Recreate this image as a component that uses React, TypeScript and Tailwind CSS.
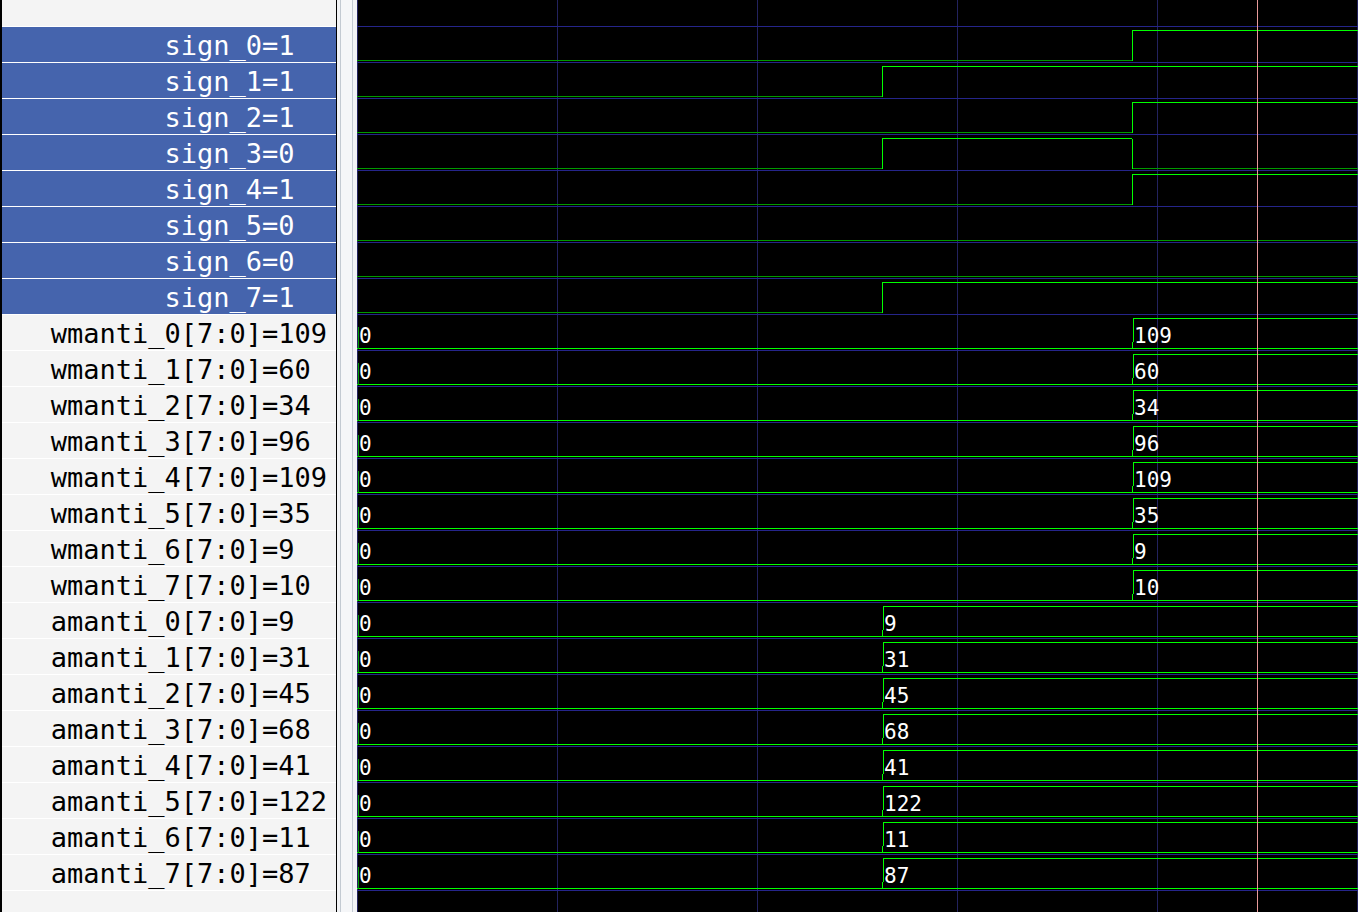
const mono = "font-['DejaVu_Sans_Mono',monospace]";

type Sig = { name: string; value: string; selected?: boolean };

const bits = ["1", "1", "1", "0", "1", "0", "0", "1"];
const wmanti = ["109", "60", "34", "96", "109", "35", "9", "10"];
const amanti = ["9", "31", "45", "68", "41", "122", "11", "87"];

const signals: Sig[] = [
  ...bits.map((v, i) => ({ name: `sign_${i}`, value: v, selected: true })),
  ...wmanti.map((v, i) => ({ name: `wmanti_${i}[7:0]`, value: v })),
  ...amanti.map((v, i) => ({ name: `amanti_${i}[7:0]`, value: v })),
];

// single bit traces: [level, from, to] in local x (waveform starts at page x 357)
const bitTraces: number[][][] = [
  [[0, 0, 775], [1, 775, 1001]],
  [[0, 0, 525], [1, 525, 1001]],
  [[0, 0, 775], [1, 775, 1001]],
  [[0, 0, 525], [1, 525, 775], [0, 775, 1001]],
  [[0, 0, 775], [1, 775, 1001]],
  [[0, 0, 1001]],
  [[0, 0, 1001]],
  [[0, 0, 525], [1, 525, 1001]],
];

const HI = "#00ff00";
const LO = "#009a00";

function BitRow({ k, segs }: { k: number; segs: number[][] }) {
  const hi = 30 + 36 * k + 0.5;
  const lo = 60 + 36 * k + 0.5;
  const out: JSX.Element[] = [];
  segs.forEach(([lvl, a, b], i) => {
    const y = lvl ? hi : lo;
    out.push(<line key={`h${i}`} x1={a} x2={b} y1={y} y2={y} stroke={lvl ? HI : LO} />);
    if (i > 0) out.push(<line key={`v${i}`} x1={a + 0.5} x2={a + 0.5} y1={hi} y2={lo} stroke={HI} />);
  });
  return <g>{out}</g>;
}

function VecRow({ k, at, value }: { k: number; at: number; value: string }) {
  const hi = 30 + 36 * k + 0.5;
  const lo = 60 + 36 * k + 0.5;
  const base = 55 + 36 * k;
  return (
    <g>
      <line x1={0} x2={1001} y1={lo} y2={lo} stroke={HI} />
      <line x1={1.5} x2={1.5} y1={hi + 8} y2={lo} stroke={LO} />
      <line x1={at + 0.5} x2={at + 0.5} y1={lo - 7} y2={lo} stroke={HI} />
      <line x1={at + 1.5} x2={at + 1.5} y1={hi} y2={lo - 7} stroke={HI} />
      <line x1={at + 1} x2={1001} y1={hi} y2={hi} stroke={HI} />
      <text x={2} y={base} fill="#ffffff" fontSize="21" fontFamily="DejaVu Sans Mono, monospace">
        0
      </text>
      <text x={at + 2} y={base} fill="#ffffff" fontSize="21" fontFamily="DejaVu Sans Mono, monospace">
        {value}
      </text>
    </g>
  );
}

function Waves() {
  const grid = [0, 200, 400, 600, 800, 1000];
  const rows = Array.from({ length: 25 }, (_, i) => 26 + 36 * i);
  return (
    <svg width={1001} height={912} className="block shrink-0" shapeRendering="crispEdges">
      <rect width={1001} height={912} fill="#000000" />
      {grid.map((x) => (
        <line key={x} x1={x + 0.5} x2={x + 0.5} y1={0} y2={912} stroke="#22225e" />
      ))}
      {rows.map((y) => (
        <line key={y} x1={0} x2={1001} y1={y + 0.5} y2={y + 0.5} stroke="#25258a" />
      ))}
      {bitTraces.map((segs, k) => (
        <BitRow key={k} k={k} segs={segs} />
      ))}
      {wmanti.map((v, i) => (
        <VecRow key={`w${i}`} k={8 + i} at={775} value={v} />
      ))}
      {amanti.map((v, i) => (
        <VecRow key={`a${i}`} k={16 + i} at={525} value={v} />
      ))}
      <line x1={900.5} x2={900.5} y1={0} y2={912} stroke="#e89a9a" />
    </svg>
  );
}

export default function App() {
  return (
    <div className={`flex h-[912px] w-[1358px] overflow-hidden bg-black ${mono}`}>
      <div className="flex w-[337px] shrink-0 flex-col border-l-2 border-r border-black bg-[#f4f4f4]">
        <div className="h-[26px] shrink-0" />
        {signals.map((s) => (
          <div
            key={s.name}
            className={`flex h-[36px] shrink-0 overflow-hidden border-t border-white text-[27px] leading-[37px] ${
              s.selected ? "bg-[#4564ad] text-white" : "text-black"
            }`}
          >
            <span className="w-[260px] shrink-0 whitespace-pre text-right">{s.name}</span>
            <span className="whitespace-pre">={s.value}</span>
          </div>
        ))}
        <div className="flex-1 border-t border-white" />
      </div>
      <div className="w-[20px] shrink-0 bg-[#f2f3f5] pl-[3px]">
        <div className="h-full w-[13px] border-x border-[#c3cad2] bg-[#f5f6f8]" />
      </div>
      <Waves />
    </div>
  );
}
